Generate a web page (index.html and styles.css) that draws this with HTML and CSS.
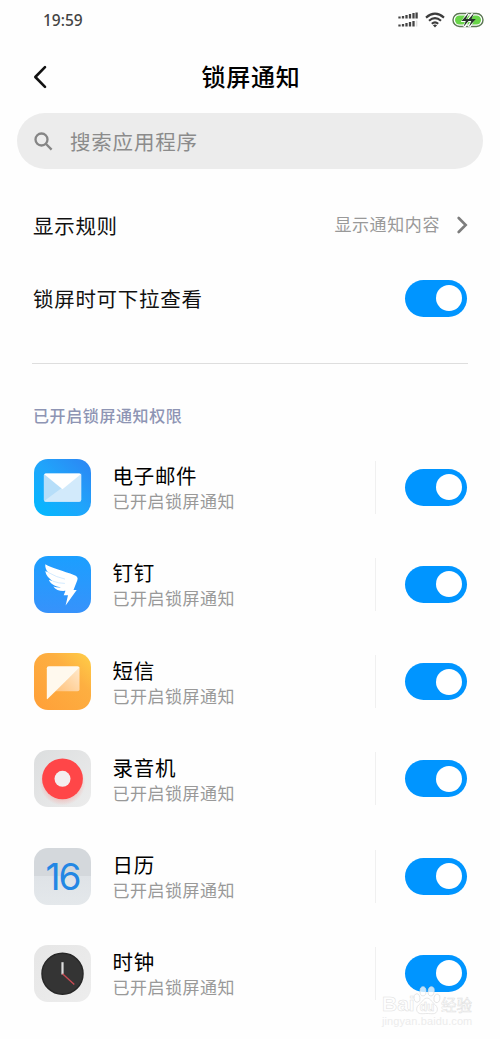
FILE: index.html
```html
<!DOCTYPE html>
<html lang="zh-CN">
  <head>
    <meta charset="UTF-8" />
    <meta name="viewport" content="width=device-width, initial-scale=1.0" />
    <title>锁屏通知</title>
    <link rel="stylesheet" href="styles.css">
  </head>
  <body>
    <div class="status">
      <span class="time">19:59</span>
      <div class="status_icons">
        <svg class="signal" width="20" height="16" viewBox="0 0 20 16">
          <path d="M1.5 4.6v1.9M5 4v2.5M8.5 3v3.5M12 2v4.5M15.5 1v5.5M18.6 .5v6M1.5 12.6v1.9M5 12v2.5M8.5 11v3.5M12 10v4.5M15.5 9v5.5" stroke="#444" stroke-width="2.3" />
          <path d="M18.6 8.5v6" stroke="#ddd" stroke-width="1.6" />
        </svg>
        <svg class="wifi" width="20" height="16" viewBox="0 0 20 16">
          <g fill="none" stroke="#3c3c3c" stroke-width="2.1">
            <path d="M1 5.6Q10-2.2 19 5.6" />
            <path d="M4 8.8Q10 3.4 16 8.8" />
            <path d="M6.8 11.7Q10 8.9 13.2 11.7" />
          </g>
          <path d="M7.9 13.2Q10 11.7 12.1 13.2L10 15.4z" fill="#3c3c3c" />
        </svg>
        <svg class="battery" width="32" height="16" viewBox="0 0 32 16">
          <rect x="1" y="1.5" width="30" height="13" rx="6.5" fill="#fff" stroke="#5b7653" stroke-width="1.4" />
          <rect x="3" y="3.5" width="26" height="9" rx="4.5" fill="#68d548" />
          <g stroke="#fff" stroke-width="3" fill="none">
            <path d="M16 1.5L11.5 8.5h4L12 15M21 1.5L16.500 8.500h4L17 15" />
          </g>
          <path d="M16.500 1L9.500 9h4.300l-2.500 6L18.300 7h-4.200zM22 1L15 9h4.300l-2.500 6L23.800 7h-4.200z" fill="#26352a" />
        </svg>
      </div>
    </div>
    <div class="header">
      <svg class="back" width="14" height="24" viewBox="0 0 14 24">
        <path d="M12 2.2L2.3 12 12 21.8" fill="none" stroke="#111" stroke-width="2.6" stroke-linecap="round" stroke-linejoin="round" />
      </svg>
      <h1>锁屏通知</h1>
    </div>
    <div class="search">
      <svg width="20" height="20" viewBox="0 0 20 20">
        <g fill="none" stroke="#858585" stroke-width="2.3">
          <circle cx="7.5" cy="8.500" r="6" />
          <path d="M11.800 12.800L17.600 18.600" />
        </g>
      </svg>
      <span>搜索应用程序</span>
    </div>
    <div class="row row_first">
      <span class="label">显示规则</span>
      <span class="value">显示通知内容</span>
      <svg class="arrow" width="11" height="18" viewBox="0 0 11 18">
        <path d="M1.7 2L8.7 9l-7 7" fill="none" stroke="#7d7d7d" stroke-width="2.6" stroke-linecap="round" />
      </svg>
    </div>
    <div class="row">
      <span class="label">锁屏时可下拉查看</span>
      <span class="switch"></span>
    </div>
    <div class="line"></div>
    <div class="section">已开启锁屏通知权限</div>
    <div class="list">
      <div class="app">
        <svg class="icon" viewBox="0 0 57 57">
          <defs>
            <linearGradient id="mail" x1="0" y1="1" x2="1" y2="0">
              <stop offset="0" stop-color="#00baff" />
              <stop offset=".5" stop-color="#20a5fb" />
              <stop offset="1" stop-color="#2d84f3" />
            </linearGradient>
          </defs>
          <rect width="57" height="57" rx="14" fill="url(#mail)" />
          <rect x="9.8" y="14.5" width="37.4" height="28.2" rx="2" fill="#b6def9" />
          <path d="M10.2 42L47.2 14.5v26.2q0 2-2 2H11.8q-1 0-1.6-.7z" fill="#d2eafb" />
          <path d="M10.2 15.2q.6-.7 1.6-.7h33.4q1 0 1.6.7L28.5 30.2z" fill="#fff" />
        </svg>
        <div class="text"><b>电子邮件</b><p>已开启锁屏通知</p></div>
        <span class="switch"></span>
      </div>
      <div class="app">
        <svg class="icon" viewBox="0 0 57 57">
          <defs>
            <linearGradient id="ding" x1="0" y1="0" x2="0" y2="1">
              <stop offset="0" stop-color="#1b9fff" />
              <stop offset="1" stop-color="#3792fb" />
            </linearGradient>
          </defs>
          <rect width="57" height="57" rx="14" fill="url(#ding)" />
          <path d="M11.3 8.2C18 12.4 29 14.5 40.5 19.2c2.5 1 3.800 2.600 2.800 5L39.500 34h3.200L31.600 49.400l2.400-10.200h-4.300l1.800-4.400c-5 .5-9.800-.6-12.200-4.300 2.700.8 5.400 1.100 8.200.8-6.400-.8-11.400-3.400-12.600-7.600l4 1.500C15.500 23 11.800 19.500 11.300 15.100l2.700 1.200c-2-2.500-3-5-2.700-8.100z" fill="#fff" />
          <path d="M14 16.300q8.500 5 17 6.800M18.900 25.200q6 2.200 12 2.200" fill="none" stroke="#b7ddff" stroke-width=".6" />
        </svg>
        <div class="text"><b>钉钉</b><p>已开启锁屏通知</p></div>
        <span class="switch"></span>
      </div>
      <div class="app">
        <svg class="icon" viewBox="0 0 57 57">
          <defs>
            <linearGradient id="sms" x1="0" y1="1" x2="1" y2="0">
              <stop offset="0" stop-color="#ff9f38" />
              <stop offset=".65" stop-color="#fdaf41" />
              <stop offset="1" stop-color="#ffcf48" />
            </linearGradient>
            <linearGradient id="bubble" x1="0" y1="1" x2="1" y2="0">
              <stop offset="0" stop-color="#ffc27c" />
              <stop offset="1" stop-color="#ffe9cc" />
            </linearGradient>
          </defs>
          <rect width="57" height="57" rx="14" fill="url(#sms)" />
          <path d="M45.500 14.500v21.700q0 2-2 2H21z" fill="url(#bubble)" />
          <path d="M12.8 15.2q0-2 2-2h28.700q2 0 2 1.600L13.500 46q-.7.500-.7-.5z" fill="#fff9ee" />
        </svg>
        <div class="text"><b>短信</b><p>已开启锁屏通知</p></div>
        <span class="switch"></span>
      </div>
      <div class="app">
        <svg class="icon" viewBox="0 0 57 57">
          <defs>
            <linearGradient id="rec" x1="0" y1="0" x2="1" y2="1">
              <stop offset="0" stop-color="#dcdedf" />
              <stop offset="1" stop-color="#ececec" />
            </linearGradient>
            <radialGradient id="glow">
              <stop offset=".6" stop-color="#ff7770" stop-opacity=".45" />
              <stop offset="1" stop-color="#ff7770" stop-opacity="0" />
            </radialGradient>
          </defs>
          <rect width="57" height="57" rx="14" fill="url(#rec)" />
          <circle cx="28.5" cy="32.5" r="23" fill="url(#glow)" />
          <circle cx="28.5" cy="28.8" r="20.4" fill="#ff4648" />
          <circle cx="28.5" cy="28.8" r="8" fill="#f4efef" />
        </svg>
        <div class="text"><b>录音机</b><p>已开启锁屏通知</p></div>
        <span class="switch"></span>
      </div>
      <div class="app">
        <div class="icon calendar">16</div>
        <div class="text"><b>日历</b><p>已开启锁屏通知</p></div>
        <span class="switch"></span>
      </div>
      <div class="app">
        <svg class="icon" viewBox="0 0 57 57">
          <defs>
            <linearGradient id="clock" x1="0" y1="0" x2="1" y2="1">
              <stop offset="0" stop-color="#e6e6e6" />
              <stop offset="1" stop-color="#ededed" />
            </linearGradient>
          </defs>
          <rect width="57" height="57" rx="14" fill="url(#clock)" />
          <circle cx="28.5" cy="28.8" r="20.500" fill="#343434" stroke="#272727" stroke-width="1.5" />
          <path d="M28.5 17.2v12.300" stroke="#dedede" stroke-width="2.2" />
          <path d="M28.5 28.8l11.800 10.700" stroke="#c84b53" stroke-width="1.4" />
        </svg>
        <div class="text"><b>时钟</b><p>已开启锁屏通知</p></div>
        <span class="switch"></span>
      </div>
    </div>
    <div class="watermark">
      <div class="brand">
        <span class="bai">Bai</span>
        <span class="paw">
          <svg width="28" height="29" viewBox="0 0 28 29">
            <g fill="#fff" fill-opacity=".75" stroke="#dcdcdc" stroke-width=".7">
              <ellipse cx="4" cy="12" rx="3" ry="4.2" transform="rotate(-12 4 12)" />
              <ellipse cx="10" cy="5.3" rx="3" ry="4.6" />
              <ellipse cx="18.2" cy="5.3" rx="3" ry="4.6" transform="rotate(8 18 5)" />
              <ellipse cx="24" cy="12.4" rx="3" ry="4.2" transform="rotate(12 24 12)" />
              <path d="M14 12c-3 0-4.4 3.3-6.5 5.2-3 2.7-4.2 4.1-3.8 6.8.8 5 6.2 3.5 10.300 3.500s9.500 1.500 10.300-3.500c.4-2.700-.8-4.100-3.800-6.800C18.400 15.300 17 12 14 12z" />
            </g>
          </svg>
          <i>du</i>
        </span>
        <span class="jy">经验</span>
      </div>
      <div class="url">jingyan.baidu.com</div>
    </div>
  </body>
</html>
```
FILE: styles.css
```css
* {
  box-sizing: border-box;
}
body {
  margin: 0;
  height: 1039px;
  overflow: hidden;
  background: #fefefe;
  color: #111;
  font-family: "Noto Sans CJK SC", sans-serif;
  position: relative;
}
.status {
  display: flex;
  justify-content: space-between;
  align-items: center;
  height: 40px;
  padding: 0 16px 0 43px;
}
.time {
  font: 500 15.5px/20px "Noto Sans", sans-serif;
  color: #444;
}
.status_icons {
  display: flex;
  align-items: center;
  gap: 7px;
}
.header {
  display: flex;
  align-items: center;
  height: 73px;
  padding: 0 33px;
}
.header h1 {
  flex: 1;
  margin: 0 12px 2px 0;
  text-align: center;
  font-size: 24px;
  font-weight: 500;
  line-height: 36px;
  letter-spacing: 0.8px;
  color: #000;
}
.search {
  display: flex;
  align-items: center;
  height: 56px;
  margin: 0 17px;
  padding: 0 17px;
  gap: 16px;
  border-radius: 28px;
  background: #ececec;
  color: #8b8b8b;
  font-size: 20.5px;
  letter-spacing: 0.8px;
}
.row {
  display: flex;
  align-items: center;
  height: 74px;
  padding: 0 33px;
}
.row_first {
  height: 73px;
  margin-top: 19px;
  padding-right: 32px;
}
.label {
  flex: 1;
  font-size: 20.5px;
  line-height: 30px;
  letter-spacing: 0.7px;
}
.value {
  font-size: 17px;
  line-height: 24px;
  margin-bottom: 2px;
  letter-spacing: 0.6px;
  color: #999;
}
.arrow {
  margin-left: 17px;
}
.switch {
  flex: none;
  display: flex;
  justify-content: flex-end;
  align-items: center;
  width: 62px;
  height: 37px;
  padding: 0 5px;
  border-radius: 19px;
  background: #0095ff;
}
.switch::after {
  content: "";
  width: 26px;
  height: 26px;
  border-radius: 50%;
  background: #fff;
}
.line {
  height: 1px;
  margin: 28px 32px 0;
  background: #dedede;
}
.section {
  height: 74.5px;
  padding: 39px 33px 0;
  font-size: 16px;
  font-weight: 500;
  line-height: 24px;
  letter-spacing: 0.6px;
  color: #8e95b4;
}
.app {
  display: flex;
  align-items: center;
  height: 97.25px;
  padding: 0 33px 0 34px;
}
.icon {
  flex: none;
  width: 57px;
  height: 57px;
}
.calendar {
  border-radius: 14px;
  background: linear-gradient(#d4d8dc 50%, #dfe3e7 50%, #e4e8eb);
  color: #2387e4;
  font: 400 37px/57px Inter, sans-serif;
  text-align: center;
  letter-spacing: -2px;
}
.text {
  flex: 1;
  display: flex;
  flex-direction: column;
  justify-content: center;
  height: 53px;
  margin: 0 29px 0 21.5px;
  border-right: 1px solid #f0f0f0;
}
.text b {
  font-size: 20.5px;
  font-weight: 400;
  line-height: 28px;
  letter-spacing: 0.7px;
  color: #000;
}
.text p {
  margin: 0;
  font-size: 17px;
  line-height: 24px;
  letter-spacing: 0.5px;
  color: #999;
}
.watermark {
  position: absolute;
  left: 382px;
  top: 984px;
  width: 94px;
  color: rgba(255, 255, 255, 0.75);
  -webkit-text-stroke: 0.5px #dedede;
  white-space: nowrap;
}
.brand {
  display: flex;
  align-items: flex-end;
  height: 31px;
}
.bai {
  width: 31px;
  font: 700 21px/22px "Liberation Sans", sans-serif;
}
.paw {
  display: grid;
  width: 28px;
}
.paw svg,
.paw i {
  grid-area: 1 / 1;
}
.paw i {
  align-self: end;
  text-align: center;
  font: 700 12px/15px "Liberation Sans", sans-serif;
}
.jy {
  font-size: 15.5px;
  font-weight: 400;
  line-height: 22px;
}
.url {
  font: 11px/13px "Liberation Sans", sans-serif;
  letter-spacing: 0.1px;
  color: #ececec;
  -webkit-text-stroke: 0;
}
```
